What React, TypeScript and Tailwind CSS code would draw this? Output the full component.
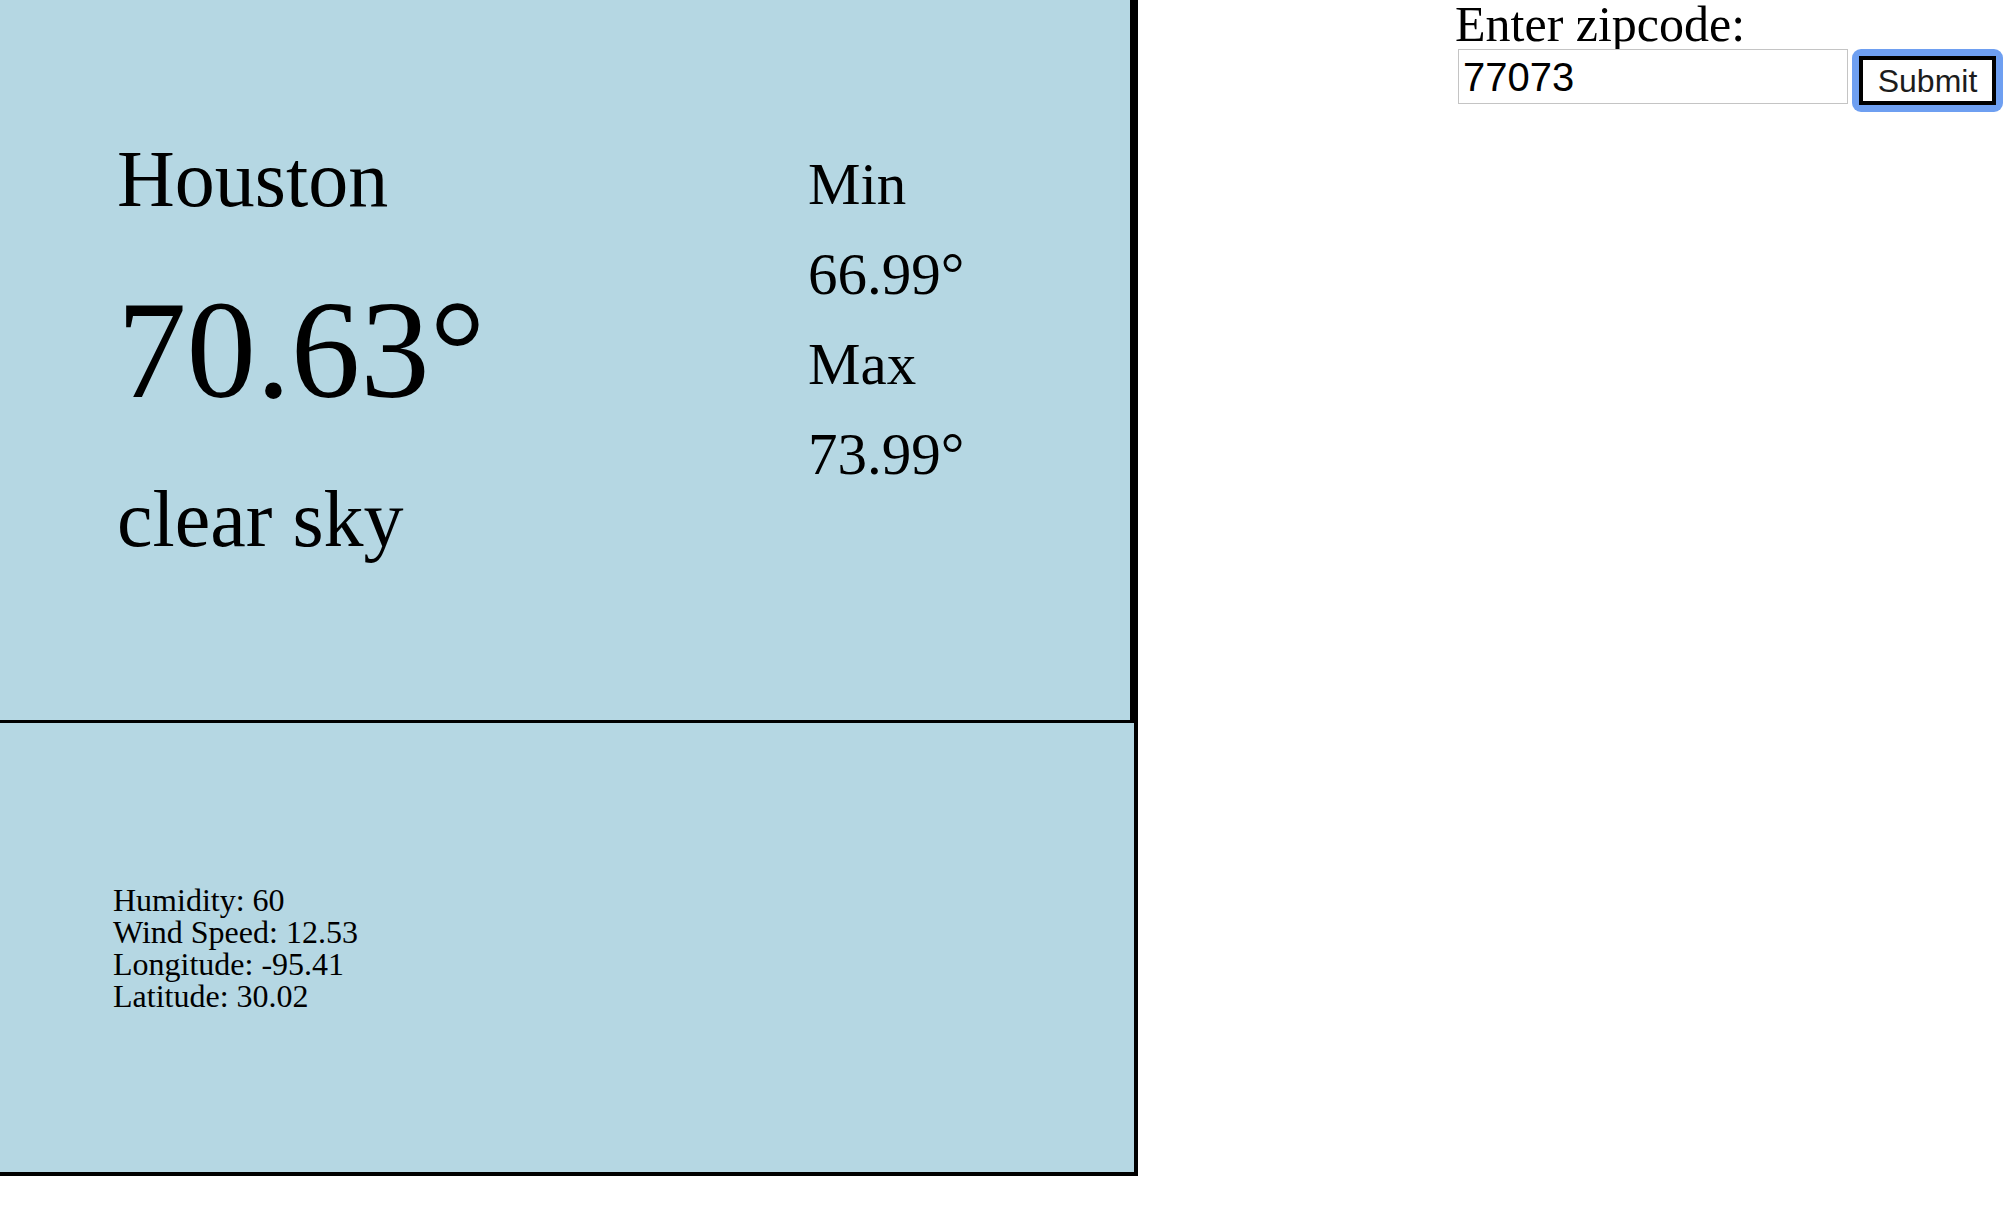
import React from "react";

export default function App() {
  return (
    <div className="flex min-h-screen w-full bg-white text-black font-['Liberation_Serif',serif]">
      <div className="flex w-[1138px] shrink-0 flex-col">
        <div className="flex h-[723px] border-r-[8px] border-b-[3px] border-black bg-[#b5d7e3] pl-[117px] pt-[139px]">
          <div className="w-[691px] shrink-0">
            <div className="text-[80px] leading-[80px]">Houston</div>
            <div className="mt-[62px] text-[139px] leading-[139px]">70.63°</div>
            <div className="mt-[59px] text-[80px] leading-[80px]">clear sky</div>
          </div>
          <div className="text-[59px] leading-[90px]">
            <div>Min</div>
            <div>66.99°</div>
            <div>Max</div>
            <div>73.99°</div>
          </div>
        </div>
        <div className="flex h-[453px] items-center border-r-4 border-b-4 border-black bg-[#b5d7e3] pl-[113px]">
          <div className="text-[32px] leading-[32px]">
            <div>Humidity: 60</div>
            <div>Wind Speed: 12.53</div>
            <div>Longitude: -95.41</div>
            <div>Latitude: 30.02</div>
          </div>
        </div>
      </div>
      <div className="flex-1 pl-[317px]">
        <div className="text-[50px] leading-[48px]">Enter zipcode:</div>
        <div className="mt-[1px] flex items-start">
          <div className="ml-[3px] flex h-[55px] w-[390px] items-center border border-[#c4c4c4] bg-white px-[4px] font-['Liberation_Sans',sans-serif] text-[40px] text-black">
            77073
          </div>
          <div className="ml-[4px] rounded-[9px] bg-[#6e9ff1] p-[7px]">
            <button className="flex h-[49px] w-[137px] items-center justify-center border-4 border-black bg-white font-['Liberation_Sans',sans-serif] text-[32px] text-[#1c1c1c]">
              Submit
            </button>
          </div>
        </div>
      </div>
    </div>
  );
}
